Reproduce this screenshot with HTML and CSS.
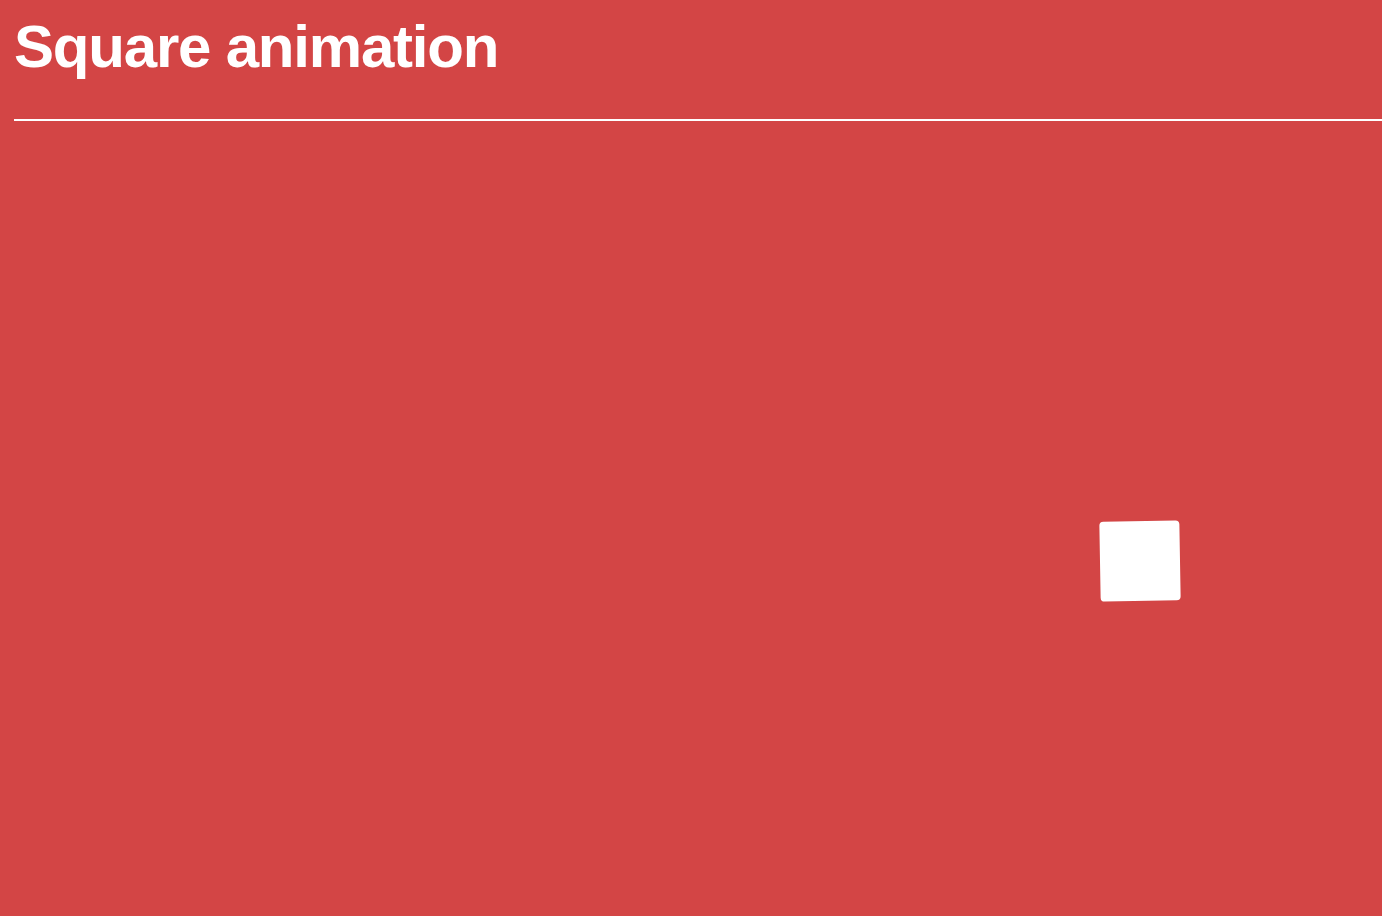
FILE: index.html
```html
<!DOCTYPE html>
<html lang="en">
<head>
<meta charset="utf-8">
<title>Square animation</title>
<link rel="stylesheet" href="styles.css">
</head>
<body>
<header class="header">
  <h1 class="title">Square animation</h1>
</header>
<main class="stage">
  <div class="square"></div>
</main>
</body>
</html>
```
FILE: styles.css
```css
html, body {
  margin: 0;
  padding: 0;
  height: 100%;
}
body {
  background: #d34545;
  color: #ffffff;
  font-family: "Liberation Sans", Arial, sans-serif;
  overflow: hidden;
}
.header {
  padding: 0 0 0 14px;
}
.title {
  margin: 0;
  padding-top: 12px;
  height: 121px;
  box-sizing: border-box;
  font-size: 60px;
  line-height: 70px;
  font-weight: bold;
  letter-spacing: -1.2px;
  border-bottom: 2px solid #ffffff;
}
.stage {
  position: relative;
  height: 795px;
}
.square {
  position: absolute;
  left: 1100px;
  top: 400px;
  width: 80px;
  height: 80px;
  background: #ffffff;
  border-radius: 4px;
  transform: rotate(-1deg);
}
```
